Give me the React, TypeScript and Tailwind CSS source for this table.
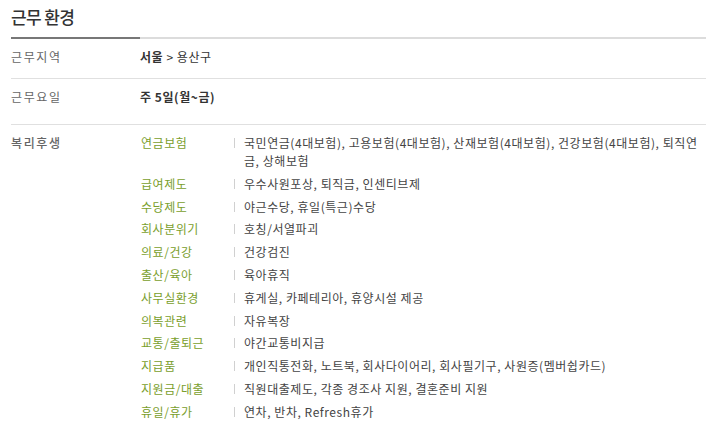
import React from "react";

const benefits: [string, string][] = [
  ["연금보험", "국민연금(4대보험), 고용보험(4대보험), 산재보험(4대보험), 건강보험(4대보험), 퇴직연금, 상해보험"],
  ["급여제도", "우수사원포상, 퇴직금, 인센티브제"],
  ["수당제도", "야근수당, 휴일(특근)수당"],
  ["회사분위기", "호칭/서열파괴"],
  ["의료/건강", "건강검진"],
  ["출산/육아", "육아휴직"],
  ["사무실환경", "휴게실, 카페테리아, 휴양시설 제공"],
  ["의복관련", "자유복장"],
  ["교통/출퇴근", "야간교통비지급"],
  ["지급품", "개인직통전화, 노트북, 회사다이어리, 회사필기구, 사원증(멤버쉽카드)"],
  ["지원금/대출", "직원대출제도, 각종 경조사 지원, 결혼준비 지원"],
  ["휴일/휴가", "연차, 반차, Refresh휴가"],
];

export default function App() {
  return (
    <div
      className="bg-white min-h-[428px] pl-[11px] w-[706px] text-[12px] text-[#333] tracking-[0.55px]"
      style={{ fontFamily: '"Noto Sans CJK KR", "Noto Sans", sans-serif' }}
    >
      <h2 className="h-[37px] pt-[7px] text-[17px] leading-[20px] tracking-[-0.6px] text-[#333] font-medium">
        근무&nbsp;환경
      </h2>
      <div className="flex h-[2px]">
        <div className="w-[129px] bg-[#777]" />
        <div className="flex-1 bg-[#dcdcdc]" />
      </div>

      <div className="flex pt-[9px] pb-[12px] leading-[18px] border-b border-[#e0e0e0]">
        <div className="w-[129px] text-[#666] tracking-[1.6px]">근무지역</div>
        <div>
          <span className="font-bold">서울</span> &gt; 용산구
        </div>
      </div>

      <div className="flex pt-[9px] pb-[18px] leading-[18px] border-b border-[#e0e0e0]">
        <div className="w-[129px] text-[#666] tracking-[1.6px]">근무요일</div>
        <div className="font-bold">주 5일(월~금)</div>
      </div>

      <div className="flex pt-[9px] leading-[18px]">
        <div className="w-[129px] text-[#666] tracking-[1.6px] font-medium">복리후생</div>
        <div className="flex flex-col gap-[4.8px] flex-1">
          {benefits.map(([k, v]) => (
            <div key={k} className="flex">
              <div className="w-[94px] pl-[1px] text-[#7a9e2c]">{k}</div>
              <div className="w-[10px] pt-[4px]">
                <div className="w-[1px] h-[10px] bg-[#d0d0d0]" />
              </div>
              <div className="flex-1 text-[#444]">{v}</div>
            </div>
          ))}
        </div>
      </div>
    </div>
  );
}
